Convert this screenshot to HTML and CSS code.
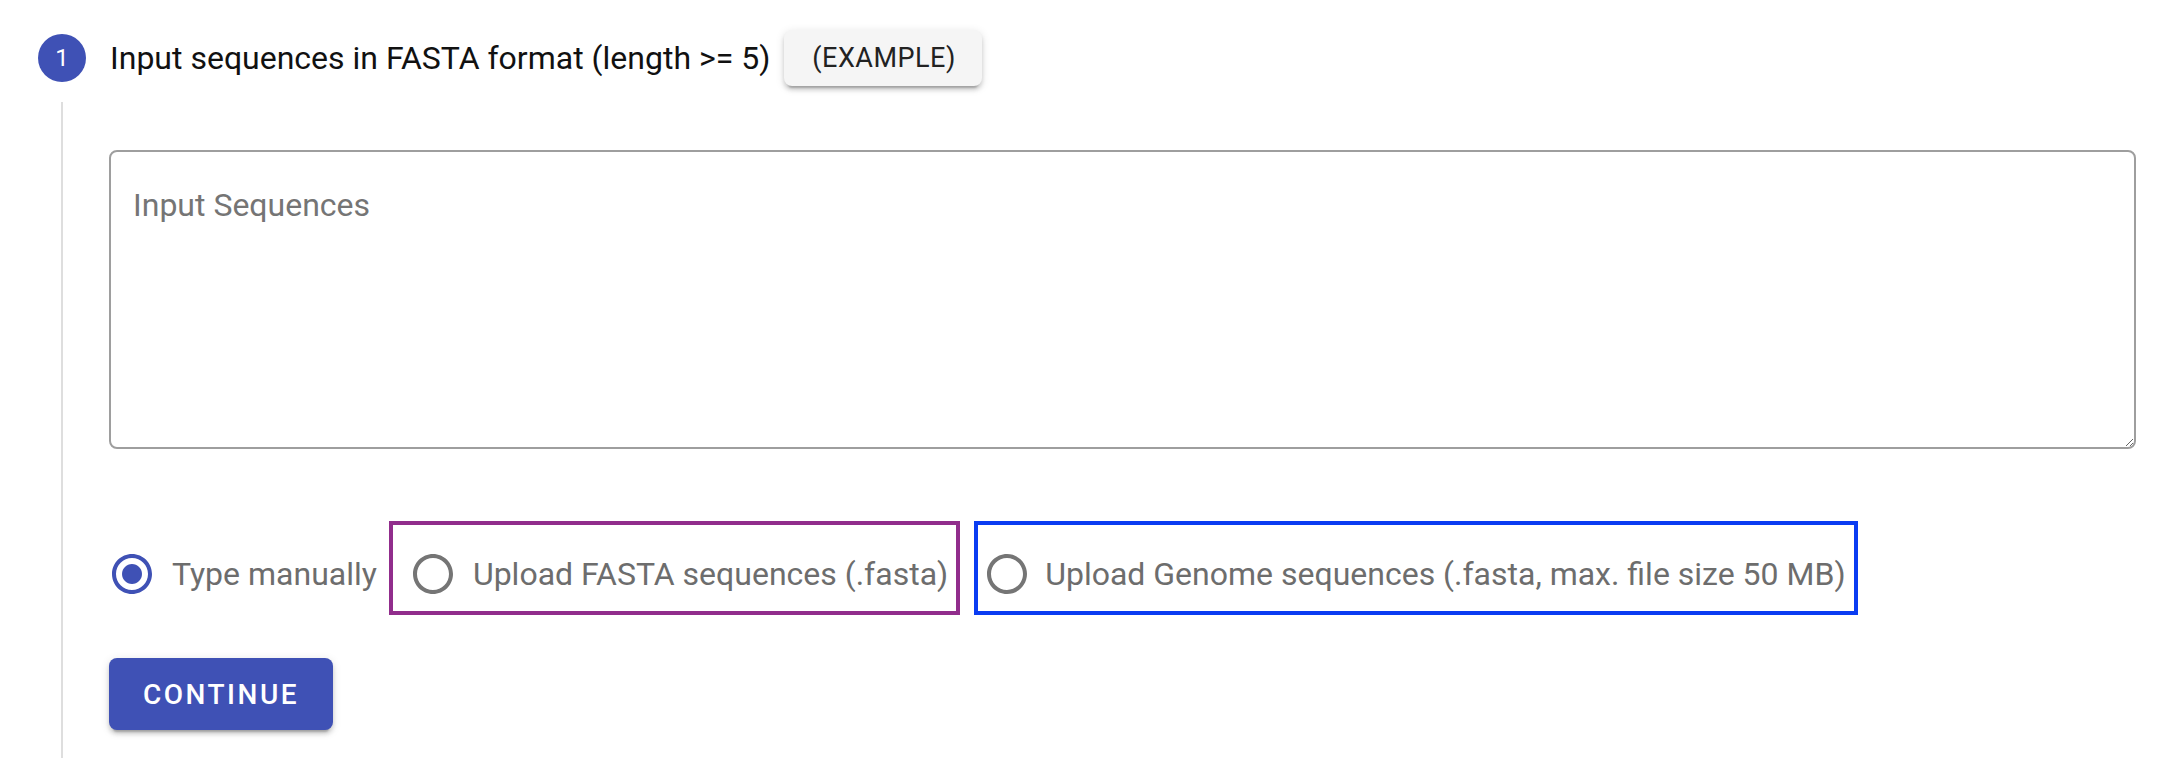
FILE: index.html
```html
<!DOCTYPE html>
<html lang="en">
<head>
<meta charset="utf-8">
<title>Input sequences</title>
<link rel="stylesheet" href="styles.css">
</head>
<body>
<div class="stepper">
  <div class="step-label">
    <span class="step-icon">1</span>
    <span class="step-title">Input sequences in FASTA format (length &gt;= 5)</span>
    <button class="btn-example" type="button">(EXAMPLE)</button>
  </div>
  <div class="step-content">
    <textarea class="seq-input" placeholder="Input Sequences"></textarea>
    <div class="radio-group">
      <label class="opt opt-plain">
        <svg class="radio radio-checked" viewBox="0 0 24 24"><path d="M12 2C6.48 2 2 6.48 2 12s4.48 10 10 10 10-4.480 10-10S17.52 2 12 2zm0 18c-4.42 0-8-3.58-8-8s3.58-8 8-8 8 3.58 8 8-3.58 8-8 8z"/><path d="M12 7c-2.76 0-5 2.240-5 5s2.24 5 5 5 5-2.24 5-5-2.24-5-5-5z"/></svg>
        <span class="opt-text">Type manually</span>
      </label>
      <div class="box box-purple">
        <label class="opt">
          <svg class="radio" viewBox="0 0 24 24"><path d="M12 2C6.48 2 2 6.48 2 12s4.48 10 10 10 10-4.48 10-10S17.52 2 12 2zm0 18c-4.42 0-8-3.58-8-8s3.58-8 8-8 8 3.58 8 8-3.58 8-8 8z"/></svg>
          <span class="opt-text">Upload FASTA sequences (.fasta)</span>
        </label>
      </div>
      <div class="box box-blue">
        <label class="opt">
          <svg class="radio" viewBox="0 0 24 24"><path d="M12 2C6.48 2 2 6.48 2 12s4.48 10 10 10 10-4.48 10-10S17.52 2 12 2zm0 18c-4.42 0-8-3.58-8-8s3.58-8 8-8 8 3.58 8 8-3.58 8-8 8z"/></svg>
          <span class="opt-text opt-text-tight">Upload Genome sequences (.fasta, max. file size 50 MB)</span>
        </label>
      </div>
    </div>
    <button class="btn-continue" type="button">CONTINUE</button>
  </div>
</div>
</body>
</html>
```
FILE: styles.css
```css
html, body {
  margin: 0;
  padding: 0;
  background: #fff;
}
body {
  font-family: Roboto, "Liberation Sans", Arial, sans-serif;
  height: 758px;
  overflow: hidden;
}
.stepper {
  padding: 30px 44px 0 38px;
}
.step-label {
  display: flex;
  align-items: center;
  height: 56px;
}
.step-icon {
  width: 48px;
  height: 48px;
  border-radius: 50%;
  background: #3f51b5;
  color: #fff;
  font-size: 24px;
  display: flex;
  align-items: center;
  justify-content: center;
  flex: none;
}
.step-title {
  margin-left: 24px;
  font-size: 32px;
  color: #111;
  white-space: nowrap;
}
.btn-example {
  margin-left: 14px;
  height: 56px;
  padding: 0 26px 0 28px;
  border: 0;
  border-radius: 8px;
  background: #f5f5f5;
  color: #222;
  font-family: inherit;
  font-size: 27px;
  letter-spacing: 0.5px;
  box-shadow: 0 6px 2px -4px rgba(0,0,0,0.2), 0 4px 4px 0 rgba(0,0,0,0.14), 0 2px 10px 0 rgba(0,0,0,0.12);
}
.step-content {
  margin-top: 16px;
  margin-left: 23px;
  border-left: 2px solid #dedede;
  padding: 48px 0 60px 46px;
}
.seq-input {
  display: block;
  box-sizing: border-box;
  width: 100%;
  height: 299px;
  border: 2px solid #9e9e9e;
  border-radius: 8px;
  padding: 34px 22px;
  font-family: inherit;
  font-size: 32px;
  color: #222;
  resize: both;
  outline: none;
}
.seq-input::placeholder {
  color: #757575;
}
.radio-group {
  margin-top: 72px;
  display: flex;
  align-items: flex-start;
}
.opt {
  display: flex;
  align-items: center;
  height: 77px;
}
.opt-plain {
  margin: 14px 12px 0 -1px;
}
.radio {
  width: 48px;
  height: 48px;
  fill: #757575;
  flex: none;
}
.radio-checked {
  fill: #3f51b5;
}
.opt-text {
  margin-left: 16px;
  font-size: 32px;
  color: #6d6d6d;
  white-space: nowrap;
}
.opt-text-tight {
  margin-left: 14px;
}
.box {
  box-sizing: border-box;
  height: 94px;
  padding-top: 10px;
  border: 4px solid;
}
.box-purple {
  border-color: #912d8c;
  padding-left: 16px;
  padding-right: 8px;
}
.box-blue {
  margin-left: 14px;
  border-color: #0a3cf2;
  padding-left: 5px;
  padding-right: 8px;
}
.btn-continue {
  display: block;
  margin-top: 43px;
  height: 72px;
  padding: 0 34px;
  border: 0;
  border-radius: 8px;
  background: #3f51b5;
  color: #fff;
  font-family: inherit;
  font-size: 28px;
  font-weight: 500;
  letter-spacing: 2.5px;
  box-shadow: 0 6px 2px -4px rgba(0,0,0,0.2), 0 4px 4px 0 rgba(0,0,0,0.14), 0 2px 10px 0 rgba(0,0,0,0.12);
}
```
